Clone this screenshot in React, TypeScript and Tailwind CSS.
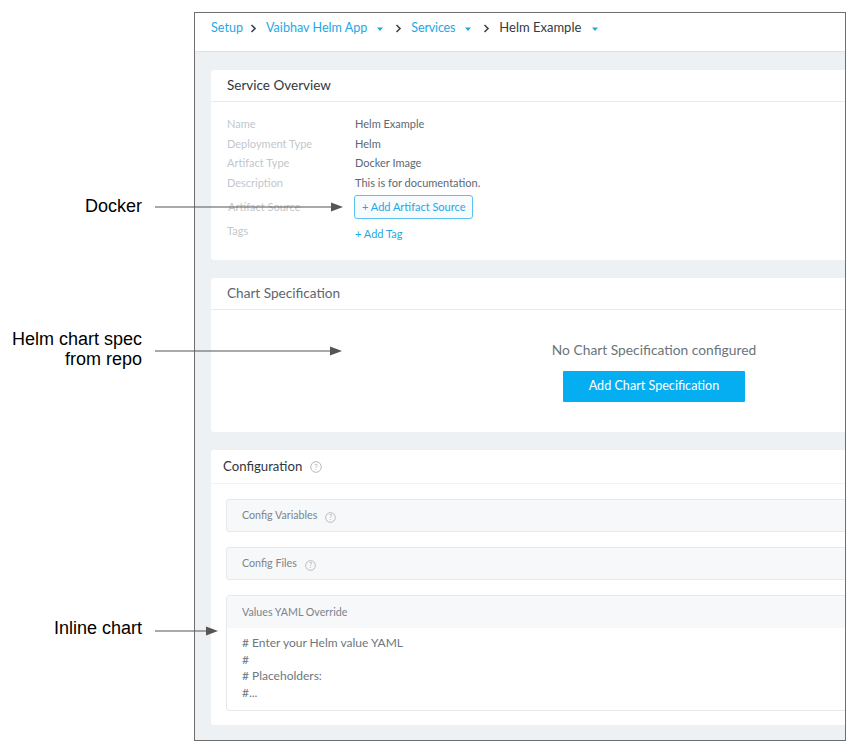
import React from "react";

const Caret = ({ ml = 9 }: { ml?: number }) => (
  <svg width="8" height="5" viewBox="0 0 8 5" className="mt-[2px]" style={{ marginLeft: ml }}>
    <path d="M1 0.5 L7 0.5 L4 4 Z" fill="#1fa8e6" />
  </svg>
);

const Chevron = ({ ml, mr }: { ml: number; mr: number }) => (
  <svg width="7" height="9" viewBox="0 0 7 9" style={{ marginLeft: ml, marginRight: mr }}>
    <path d="M1.5 1 L5 4.5 L1.5 8" stroke="#3b4650" strokeWidth="1.6" fill="none" />
  </svg>
);

const Help = ({ size = 11 }: { size?: number }) => (
  <svg width={size} height={size} viewBox="0 0 12 12">
    <circle cx="6" cy="6" r="5.3" stroke="#aab2b9" strokeWidth="0.9" fill="none" />
    <text x="6" y="8.6" textAnchor="middle" fontSize="7.5" fill="#aab2b9" fontFamily="Lato, sans-serif">?</text>
  </svg>
);

const Arrow = ({ x1, x2, y }: { x1: number; x2: number; y: number }) => (
  <svg
    className="absolute pointer-events-none"
    style={{ left: x1, top: y - 6, width: x2 - x1 + 1, height: 12 }}
    viewBox={`0 0 ${x2 - x1 + 1} 12`}
  >
    <line x1="0" y1="6" x2={x2 - x1 - 10} y2="6" stroke="#555" strokeWidth="1.1" />
    <path d={`M${x2 - x1 - 12} 1.5 L${x2 - x1} 6 L${x2 - x1 - 12} 10.5 Z`} fill="#555" />
  </svg>
);

const rows: [string, string][] = [
  ["Name", "Helm Example"],
  ["Deployment Type", "Helm"],
  ["Artifact Type", "Docker Image"],
  ["Description", "This is for documentation."],
];

export default function App() {
  return (
    <div className="relative w-[852px] h-[756px] bg-white overflow-hidden" style={{ fontFamily: "Lato, 'Noto Sans', sans-serif" }}>
      <div className="ml-[194px] mt-[12px] w-[652px] h-[729px] border border-[#6e6e6e] overflow-hidden flex flex-col">
        {/* header */}
        <div className="h-[39px] shrink-0 bg-white border-b border-[#dde2e6] flex items-center pl-[16px] pb-[8px] text-[12.6px]">
          <span className="text-[#1fa8e6]">Setup</span>
          <Chevron ml={7} mr={9} />
          <span className="text-[#1fa8e6]">Vaibhav Helm App</span>
          <Caret ml={9} />
          <Chevron ml={11} mr={9} />
          <span className="text-[#1fa8e6] tracking-[-0.2px]">Services</span>
          <Caret ml={9} />
          <Chevron ml={11} mr={9} />
          <span className="text-[#333b42] text-[13px]">Helm Example</span>
          <Caret ml={10} />
        </div>
        {/* body */}
        <div className="flex-1 bg-[#eef1f4] pl-[16px] pt-[18px] flex flex-col gap-[18px]">
          {/* Service Overview */}
          <div className="w-[886px] h-[190px] shrink-0 bg-white rounded-[3px] flex flex-col">
            <div className="h-[32px] border-b border-[#e8ebee] flex items-center pl-[16px] text-[13.5px] text-[#2f373e]">
              Service Overview
            </div>
            <div className="pl-[16px] pt-[12px] text-[11px] leading-[19.5px]">
              {rows.map(([k, v]) => (
                <div key={k} className="flex">
                  <span className="w-[128px] text-[#c2c7cc]">{k}</span>
                  <span className="text-[#5d6871]">{v}</span>
                </div>
              ))}
              <div className="flex items-center mt-[3px] h-[24px]">
                <span className="w-[127px] text-[#c2c7cc] pl-[1px]">Artifact Source</span>
                <span className="h-[24px] px-[7px] flex items-center border border-[#5cc3ef] rounded-[3px] bg-[#f7fbfd] text-[#1fa8e6]">
                  + Add Artifact Source
                </span>
              </div>
              <div className="flex mt-[2px]">
                <span className="w-[128px] text-[#c2c7cc]">Tags</span>
                <span className="text-[#1fa8e6] mt-[3px]">+ Add Tag</span>
              </div>
            </div>
          </div>
          {/* Chart Specification */}
          <div className="w-[886px] h-[154px] shrink-0 bg-white rounded-[3px] flex flex-col">
            <div className="h-[32px] border-b border-[#e8ebee] flex items-center pl-[16px] text-[13.6px] text-[#5b6670]">
              Chart Specification
            </div>
            <div className="flex flex-col items-center pt-[31px]">
              <div className="text-[13.8px] text-[#6a747d] leading-[18px]">No Chart Specification configured</div>
              <div className="mt-[12px] w-[182px] h-[31px] bg-[#05aef0] text-white text-[12.6px] flex items-center justify-center rounded-[1px]">
                Add Chart Specification
              </div>
            </div>
          </div>
          {/* Configuration */}
          <div className="w-[886px] h-[275px] shrink-0 bg-white rounded-[3px] flex flex-col">
            <div className="h-[34px] border-b border-[#f1f3f5] flex items-center pl-[12px] text-[13.2px] text-[#2f373e] gap-[8px]">
              Configuration <Help size={12} />
            </div>
            <div className="pl-[15px] pt-[15px] flex flex-col gap-[15px]">
              <div className="h-[33px] bg-[#f7f8fa] border border-[#e6e9ec] rounded-[3px] flex items-center pl-[15px] gap-[8px] text-[10.7px] text-[#7a848d]">
                Config Variables <span className="mt-[4px]"><Help /></span>
              </div>
              <div className="h-[33px] bg-[#f7f8fa] border border-[#e6e9ec] rounded-[3px] flex items-center pl-[15px] gap-[8px] text-[10.7px] text-[#7a848d]">
                Config Files <span className="mt-[4px]"><Help /></span>
              </div>
              <div className="h-[116px] border border-[#e6e9ec] rounded-[3px] flex flex-col">
                <div className="h-[32px] bg-[#f7f8fa] flex items-center pl-[15px] text-[10.7px] text-[#7a848d]">
                  Values YAML Override
                </div>
                <div className="pl-[15px] pt-[7px] text-[12px] leading-[16.7px] text-[#6d7780]">
                  <div># Enter your Helm value YAML</div>
                  <div>#</div>
                  <div># Placeholders:</div>
                  <div>#...</div>
                </div>
              </div>
            </div>
          </div>
        </div>
      </div>

      {/* annotations */}
      <div className="absolute right-[710px] top-[196px] text-[18px] text-black leading-[21px]" style={{ fontFamily: "'Liberation Sans', Arial, sans-serif" }}>
        Docker
      </div>
      <div className="absolute right-[710px] top-[329px] text-[18px] text-black leading-[20px] text-right" style={{ fontFamily: "'Liberation Sans', Arial, sans-serif" }}>
        Helm chart spec<br />from repo
      </div>
      <div className="absolute right-[710px] top-[618px] text-[18px] text-black leading-[21px]" style={{ fontFamily: "'Liberation Sans', Arial, sans-serif" }}>
        Inline chart
      </div>
      <Arrow x1={155} x2={343} y={207} />
      <Arrow x1={155} x2={342} y={351} />
      <Arrow x1={155} x2={218} y={631} />
    </div>
  );
}
